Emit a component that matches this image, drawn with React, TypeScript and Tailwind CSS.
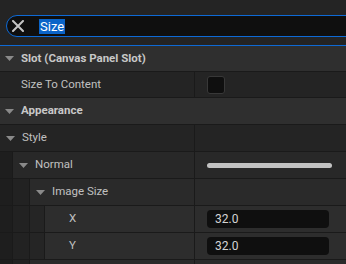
import React from 'react';

const stripColors = ['#1e1e1e', '#222222', '#252525'];
const rowColors = ['#242424', '#282828', '#2a2a2a', '#2d2d2d'];
const stripWidths = ['w-[13px]', 'w-[17px]', 'w-[15px]'];

function Arrow() {
  return (
    <svg width="9" height="5" viewBox="0 0 9 5" className="shrink-0">
      <path d="M0 0 L9 0 L4.5 5 Z" fill="#8a8a8a" />
    </svg>
  );
}

function Header({ label, tall }: { label: string; tall?: boolean }) {
  return (
    <div
      className={`flex items-center bg-[#2f2f2f] border-b border-[#1a1a1a] ${tall ? 'h-[27px]' : 'h-[26px]'}`}
    >
      <div className="pl-[5px] pr-[7px] flex items-center">
        <Arrow />
      </div>
      <span className="font-bold text-[#c8c8c8] text-[11.5px]">{label}</span>
    </div>
  );
}

function Row({
  label,
  level,
  expandable,
  tall,
  children,
}: {
  label: string;
  level: number;
  expandable?: boolean;
  tall?: boolean;
  children?: React.ReactNode;
}) {
  const strips = [];
  for (let i = 0; i < level; i++) {
    strips.push(
      <div
        key={i}
        className={`${stripWidths[i]} h-full border-r border-[#1a1a1a] shrink-0`}
        style={{ backgroundColor: stripColors[i] }}
      />
    );
  }
  return (
    <div className={`flex border-b border-[#1a1a1a] ${tall ? 'h-[27px]' : 'h-[26px]'}`}>
      {strips}
      <div className="flex flex-1 h-full" style={{ backgroundColor: rowColors[level] }}>
        <div className="flex-1 flex items-center border-r border-[#1a1a1a]">
          {expandable ? (
            <>
              <div className="pl-[6px] pr-[7px] flex items-center">
                <Arrow />
              </div>
              <span className="text-[#c0c0c0] text-[11.5px]">{label}</span>
            </>
          ) : (
            <span className={`text-[#c0c0c0] text-[11.5px] ${level === 0 ? 'pl-[21px]' : 'pl-[24px]'}`}>
              {label}
            </span>
          )}
        </div>
        <div className="w-[151px] shrink-0 flex items-center pl-[12px]">{children}</div>
      </div>
    </div>
  );
}

function NumberBox({ value }: { value: string }) {
  return (
    <div className="w-[122px] h-[18px] rounded-[4px] bg-[#0f0f0f] flex items-center pl-[8px] text-[12px] text-[#d4d4d4]">
      {value}
    </div>
  );
}

export default function App() {
  return (
    <div
      className="w-[346px] h-[264px] overflow-hidden bg-[#1a1a1a]"
      style={{ fontFamily: 'Roboto, "Noto Sans", sans-serif' }}
    >
      {/* search */}
      <div className="h-[45px] bg-[#242424] pt-[15px] pl-[6px]">
        <div className="w-[400px] h-[22px] rounded-full border border-[#0e6ad6] bg-[#0f0f0f] flex items-center">
          <svg width="12" height="12" viewBox="0 0 12 12" className="ml-[5px]">
            <path d="M1 1 L11 11 M11 1 L1 11" stroke="#c4c4c4" strokeWidth="2" strokeLinecap="round" />
          </svg>
          <span className="ml-[15px] bg-[#0b64c8] text-white text-[13px] leading-[15px] pl-[1px] pr-[1px]">
            Size
          </span>
        </div>
      </div>
      <div className="h-px bg-[#0e6ad6]" />

      <Header label="Slot (Canvas Panel Slot)" />
      <Row label="Size To Content" level={0}>
        <div className="w-[18px] h-[18px] rounded-[3px] bg-[#0f0f0f] border border-[#383838]" />
      </Row>
      <Header label="Appearance" tall />
      <Row label="Style" level={0} expandable tall />
      <Row label="Normal" level={1} expandable tall>
        <div className="w-[125px] h-[5px] rounded-full bg-[#c2c2c2]" />
      </Row>
      <Row label="Image Size" level={2} expandable tall />
      <Row label="X" level={3} tall>
        <NumberBox value="32.0" />
      </Row>
      <Row label="Y" level={3} tall>
        <NumberBox value="32.0" />
      </Row>
      <Row label="" level={2} tall />
    </div>
  );
}
